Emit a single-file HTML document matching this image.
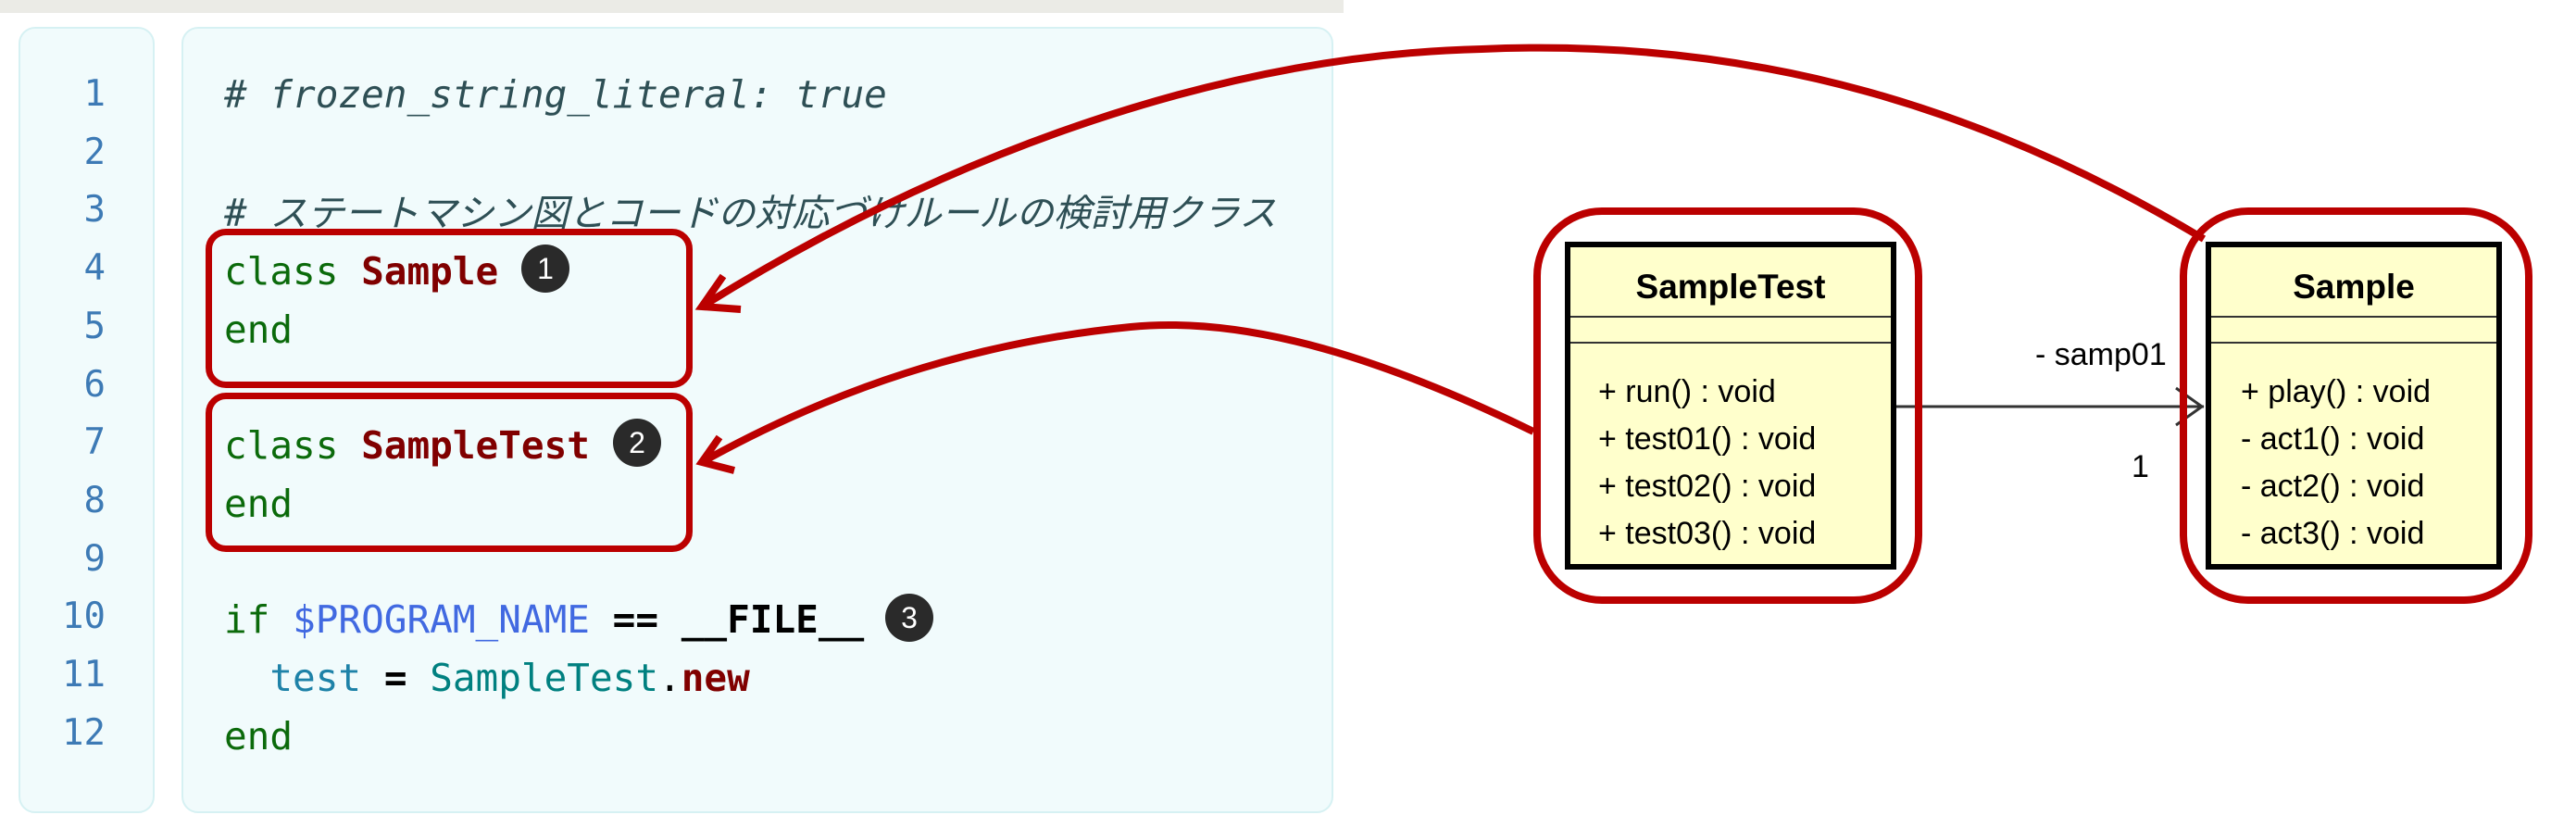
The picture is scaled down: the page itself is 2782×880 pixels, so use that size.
<!DOCTYPE html>
<html><head><meta charset="utf-8"><style>
body{margin:0;width:2782px;height:880px;background:#fff;position:relative;overflow:hidden;font-family:"DejaVu Sans Mono","Liberation Mono",monospace}
.top{position:absolute;left:0;top:0;width:1451px;height:14px;background:#ebebe6}
.pn{position:absolute;left:20px;top:29px;width:143px;height:845px;background:#f1fbfc;border:2px solid #d6f1f3;border-radius:18px}
.pc{position:absolute;left:196px;top:29px;width:1240px;height:845px;background:#f1fbfc;border:2px solid #d6f1f3;border-radius:18px}
.ln{position:absolute;left:36px;width:78px;text-align:right;font-size:39px;color:#3d7ab5;line-height:62.7px}
.code{position:absolute;left:242px;top:71px;font-size:41px;line-height:62.7px;white-space:pre;color:#000}
.cm{color:#2e4f55;font-style:italic}
.kw{color:#0b6a0b}
.cl{color:#800000;font-weight:bold}
.gv{color:#4169e1}
.lv{color:#1e82a8}
.cn{color:#008080}
.b{font-weight:bold}
.badge{position:absolute;width:52px;height:52px;border-radius:50%;background:#2a2a2a;color:#fff;font:32px "Liberation Sans",sans-serif;text-align:center;line-height:52px}
.rb{position:absolute;border:7px solid #bb0000;border-radius:22px;box-sizing:border-box}
.uml{position:absolute;background:#ffffcc;border:6px solid #000;box-sizing:border-box;font-family:"Liberation Sans",sans-serif}
.uml .t{position:absolute;left:0;right:0;top:22px;text-align:center;font-weight:bold;font-size:37px}
.uml .s1{position:absolute;left:0;right:0;top:74px;border-top:2px solid #333}
.uml .s2{position:absolute;left:0;right:0;top:102px;border-top:2px solid #333}
.uml .m{position:absolute;left:30px;top:131px;font-size:34px;line-height:51px;white-space:pre}
.lbl{position:absolute;font:34px "Liberation Sans",sans-serif}
</style></head><body>
<div class="top"></div>
<div class="pn"></div>
<div class="pc"></div>
<div class="ln" style="top:71px">1<br>2<br>3<br>4<br>5<br>6<br>7<br>8<br>9<br>10<br>11<br>12</div>
<div class="code"><span class="cm"># frozen_string_literal: true</span>

<span class="cm"># <span style="font-family:'Noto Sans CJK JP',sans-serif;font-size:40.3px">ステートマシン図とコードの対応づけルールの検討用クラス</span></span>
<span class="kw">class</span> <span class="cl">Sample</span>
<span class="kw">end</span>

<span class="kw">class</span> <span class="cl">SampleTest</span>
<span class="kw">end</span>

<span class="kw">if</span> <span class="gv">$PROGRAM_NAME</span> <span class="b">==</span> <span class="b">__FILE__</span>
  <span class="lv">test</span> <span class="b">=</span> <span class="cn">SampleTest</span>.<span class="cl">new</span>
<span class="kw">end</span></div>
<div class="badge" style="left:563px;top:264px">1</div>
<div class="badge" style="left:662px;top:452px">2</div>
<div class="badge" style="left:956px;top:641px">3</div>
<div class="rb" style="left:222px;top:247px;width:526px;height:172px"></div>
<div class="rb" style="left:222px;top:424px;width:526px;height:172px"></div>

<div class="uml" style="left:1690px;top:261px;width:358px;height:354px">
<div class="t">SampleTest</div><div class="s1"></div><div class="s2"></div>
<div class="m">+ run() : void
+ test01() : void
+ test02() : void
+ test03() : void</div></div>
<div class="uml" style="left:2382px;top:261px;width:320px;height:354px">
<div class="t">Sample</div><div class="s1"></div><div class="s2"></div>
<div class="m" style="left:32px">+ play() : void
- act1() : void
- act2() : void
- act3() : void</div></div>
<div class="lbl" style="left:2198px;top:364px">- samp01</div>
<div class="lbl" style="left:2302px;top:485px">1</div>

<svg width="2782" height="880" style="position:absolute;left:0;top:0" fill="none">
<line x1="2048" y1="439" x2="2380" y2="439" stroke="#333" stroke-width="3"/>
<path d="M2350 419 L2378 439 L2350 459" stroke="#333" stroke-width="3"/>
<rect x="1660" y="228" width="412" height="420" rx="70" stroke="#bb0000" stroke-width="8"/>
<rect x="2358" y="228" width="373" height="420" rx="70" stroke="#bb0000" stroke-width="8"/>
<path d="M2380 258 C2150 120 1900 40 1600 53 C1300 60 1000 180 758 331" stroke="#bb0000" stroke-width="8"/>
<path d="M781 298 L758 331 L800 334" stroke="#bb0000" stroke-width="8"/>
<path d="M1656 466 C1500 390 1350 340 1221 353 C1050 370 900 420 758 499" stroke="#bb0000" stroke-width="8"/>
<path d="M777 472 L758 499 L793 508" stroke="#bb0000" stroke-width="8"/>
</svg>
</body></html>
